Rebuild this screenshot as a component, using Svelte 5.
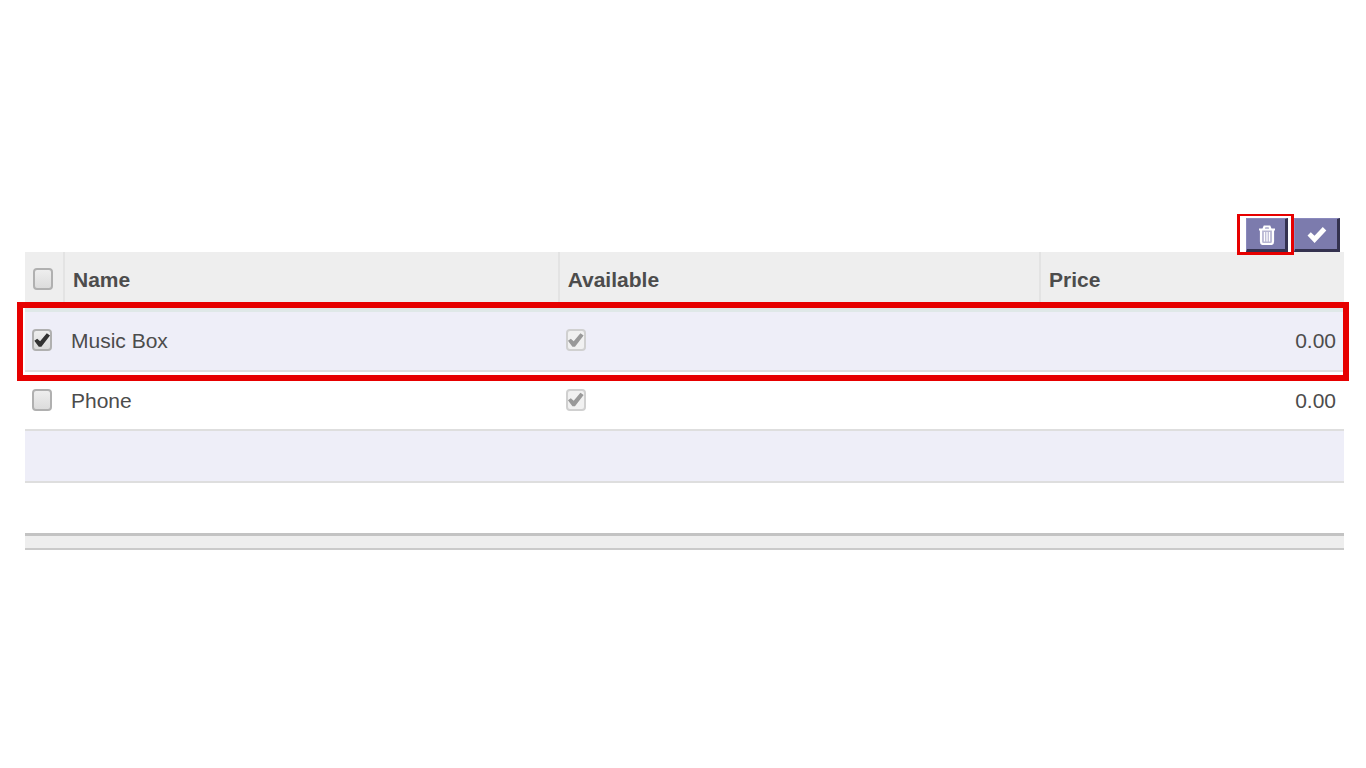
<script>
  let rows = $state([
    { name: 'Music Box', available: true, price: '0.00', selected: true },
    { name: 'Phone', available: true, price: '0.00', selected: false }
  ]);
  let all = $state(false);

  function toggleAll() {
    for (const row of rows) row.selected = all;
  }
</script>

<main>
  <div class="toolbar">
    <div class="marked">
      <button type="button" aria-label="Delete selected">
        <svg width="18" height="20" viewBox="0 0 18 20" aria-hidden="true">
          <path
            fill="none"
            stroke="#fff"
            stroke-width="2.200"
            d="M1 4.5H17M5.5 4L6.5 1.5H11.5L12.5 4M3 5V16.500Q3 19 5 19H13Q15 19 15 16.500V5"
          />
          <path fill="#fff" fill-opacity="0.45" d="M4 5H14V18H4Z" />
          <path fill="none" stroke="#fff" stroke-width="1.300" d="M6.500 7V16.500M9 7V16.500M11.500 7V16.500" />
        </svg>
      </button>
    </div>
    <button class="confirm" type="button" aria-label="Confirm">
      <svg width="20" height="18" viewBox="0 0 20 18" aria-hidden="true">
        <path fill="#fff" d="M0.500 9.500L3.800 6.200L7.500 9.800L15.800 1L19.300 4.400L7.600 17Z" />
      </svg>
    </button>
  </div>

  <table>
    <colgroup>
      <col class="pick" />
      <col class="name" />
      <col class="available" />
      <col />
    </colgroup>
    <thead>
      <tr>
        <th><input type="checkbox" aria-label="Select all" bind:checked={all} onchange={toggleAll} /></th>
        <th>Name</th>
        <th>Available</th>
        <th>Price</th>
      </tr>
    </thead>
    <tbody>
      {#each rows as row, i}
        <tr class:first={i === 0} class:highlight={row.selected}>
          <td><input type="checkbox" aria-label="Select {row.name}" bind:checked={row.selected} /></td>
          <td>{row.name}</td>
          <td><input type="checkbox" aria-label="{row.name} available" checked={row.available} disabled /></td>
          <td class="number">{row.price}</td>
        </tr>
      {/each}
      <tr class="blank"><td colspan="4"></td></tr>
      <tr class="blank"><td colspan="4"></td></tr>
    </tbody>
    <tfoot>
      <tr><td colspan="4"></td></tr>
    </tfoot>
  </table>
</main>

<style>
  :global(body) {
    margin: 0;
    background: #fff;
  }
  main {
    box-sizing: border-box;
    min-height: 100vh;
    padding: 0 22px 0 25px;
    display: flex;
    flex-direction: column;
    justify-content: center;
    font-family: 'Liberation Sans', Arial, sans-serif;
    font-size: 21px;
    line-height: 24px;
    color: #4c4c4c;
  }
  .toolbar {
    display: flex;
    justify-content: flex-end;
    gap: 6px;
    padding-right: 4px;
  }
  button {
    box-sizing: border-box;
    width: 42px;
    height: 34px;
    padding: 2px 0 0 2px;
    display: flex;
    align-items: center;
    justify-content: center;
    background: #7c7bad;
    border: solid;
    border-width: 1px 3px 3px 1px;
    border-color: #8a89bd #34324f #34324f #8a89bd;
    border-radius: 0;
  }
  .confirm {
    width: 46px;
  }
  .marked {
    position: relative;
    z-index: 1;
  }
  .marked::after {
    content: '';
    position: absolute;
    inset: -4px -6px -3px -9px;
    border: solid #e60000;
    border-width: 2px 3px 3px 3px;
    pointer-events: none;
  }
  table {
    width: 100%;
    table-layout: fixed;
    border-collapse: separate;
    border-spacing: 0;
  }
  .pick {
    width: 40px;
  }
  .name {
    width: 37.500%;
  }
  .available {
    width: 36.500%;
  }
  th,
  td {
    box-sizing: border-box;
    padding: 0 8px;
    text-align: left;
    vertical-align: middle;
  }
  th {
    height: 56px;
    background: #eee;
    border-right: 2px solid #e3e3e3;
  }
  th:last-child {
    border-right: 0;
  }
  tbody tr {
    position: relative;
  }
  tbody td {
    height: 59px;
    padding: 0 8px 0 7px;
    border-bottom: 2px solid #dedede;
  }
  tbody td + td {
    padding-left: 6px;
  }
  tbody tr:nth-child(odd) td {
    background: #eeeef8;
  }
  .first td {
    height: 64px;
    border-top: 4px solid #dfe8e8;
  }
  .highlight td:first-child::after {
    content: '';
    position: absolute;
    inset: -6px -5px -9px -8px;
    border: 6px solid #e60000;
    pointer-events: none;
  }
  tbody .number {
    text-align: right;
  }
  tbody .blank td {
    height: 52px;
  }
  tbody .blank:last-child td {
    height: 50px;
    border-bottom: 0;
  }
  tfoot td {
    height: 17px;
    background: #eee;
    border-top: 3px solid #c3c3c3;
    border-bottom: 2px solid #cacaca;
  }
  input {
    appearance: none;
    box-sizing: border-box;
    display: block;
    position: relative;
    width: 20px;
    height: 22px;
    margin: 0 0 2px;
    border: 2px solid #b0b0b0;
    border-radius: 4px;
    background: linear-gradient(#eee, #dcdcdc);
  }
  input:checked::after {
    content: '';
    position: absolute;
    inset: 1px 0;
    background: #333;
    clip-path: polygon(2% 54%, 20% 42%, 38% 58%, 80% 8%, 100% 22%, 46% 92%, 30% 92%);
  }
  input:disabled {
    border-color: #d0d0d0;
    background: #f1f1f1;
  }
  input:disabled:checked::after {
    background: #999;
  }
</style>
